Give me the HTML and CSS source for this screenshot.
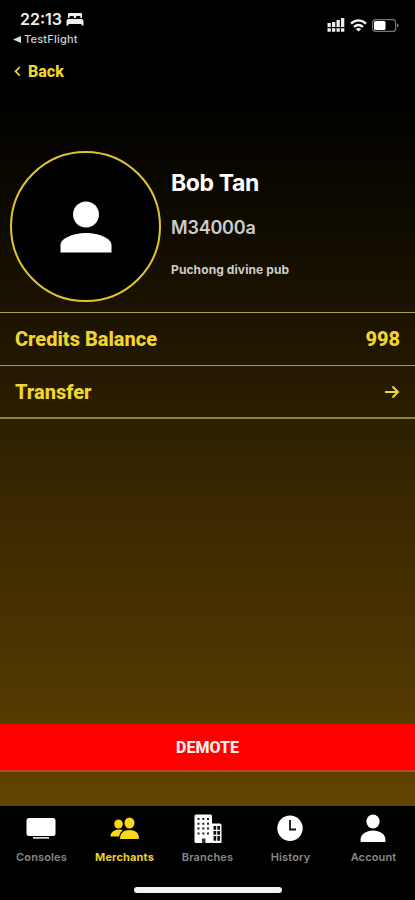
FILE: index.html
```html
<!DOCTYPE html>
<html lang="en">
<head>
<meta charset="utf-8">
<meta name="viewport" content="width=device-width, initial-scale=1">
<title>Merchant</title>
<link rel="stylesheet" href="styles.css">
</head>
<body>
<div class="screen">
  <header class="status">
    <div class="status-left">
      <div class="clock"><span class="time">22:13</span>
        <svg width="18" height="13" viewBox="0 0 18 13" fill="#eee"><path d="M3 0h12q1 0 1 1v4h-1.500V4q0-1-1-1H11q-1 0-1 1v1H8V4q0-1-1-1H4.500q-1 0-1 1v1H2V1q0-1 1-1zM2.500 6h13q2 0 2 2v4.500h-2V11h-13v1.500h-2V8q0-2 2-2z"/></svg>
      </div>
      <div class="return"><svg width="8" height="7" viewBox="0 0 8 7"><path d="M0 3.500 8 0v7z" fill="#ddd"/></svg><span class="app">TestFlight</span></div>
    </div>
    <div class="status-right">
      <svg width="18" height="14" viewBox="0 0 18 14" fill="#eee"><path d="M.5 5h3.300v4H.5zM5 4h3.300v5H5zM9.500 2h3.300v7H9.500zM14 0h3.300v9H14zM.5 10.300h3.300v3.400H.5zM5 10.300h3.300v3.400H5zM9.500 10.300h3.300v3.400H9.500zM14 10.300h3.300v3.400H14z"/></svg>
      <svg width="17" height="13" viewBox="0 0 17 13" fill="none" stroke="#f4f4f4" stroke-width="2.300"><path d="M1 4.500Q8.500-1.800 16 4.500M4 7.800q4.500-3.600 9 0"/><path d="M8.500 12.500 5.800 9.900q2.700-2 5.400 0z" fill="#f4f4f4" stroke="none"/></svg>
      <svg width="27" height="13" viewBox="0 0 27 13"><rect x=".6" y=".6" width="23" height="11.800" rx="3" fill="none" stroke="#777" stroke-width="1.200"/><rect x="2" y="2" width="11.500" height="9" rx="1.500" fill="#fff"/><path d="M25 4.500q1.500.5 1.500 2t-1.500 2z" fill="#888"/></svg>
    </div>
  </header>

  <a class="back"><svg width="7" height="11" viewBox="0 0 7 11"><path d="M5.800 1 1.500 5.300l4.300 4.300" fill="none" stroke="#f2d52e" stroke-width="1.700"/></svg><span class="back-text">Back</span></a>

  <section class="profile">
    <div class="avatar"><svg width="52" height="52" viewBox="0 0 52 52" fill="#fff"><circle cx="26" cy="13.500" r="13"/><path d="M.5 51.500V44C.5 37 14 32 26 32s25.500 5 25.500 12v7.500z"/></svg></div>
    <div class="details">
      <h1 class="name">Bob Tan</h1>
      <div class="code">M34000a</div>
      <div class="place">Puchong divine pub</div>
    </div>
  </section>

  <div class="rows">
    <div class="row"><span class="credits">Credits Balance</span><span class="amount">998</span></div>
    <div class="row"><span class="transfer">Transfer</span><svg class="arrow" width="15" height="14" viewBox="0 0 15 14"><path d="M0 7h13M7.500 1.500 13 7l-5.500 5.500" fill="none" stroke="#f2d52e" stroke-width="2"/></svg></div>
  </div>

  <button class="demote"><span>DEMOTE</span></button>

  <nav class="tabs">
    <div class="tab"><div class="icon consoles"><svg width="30" height="30" viewBox="0 0 30 30"><rect x=".5" y="4" width="29" height="18" rx="2.500" fill="#fff"/><path d="M7 23h16v1.700H7z" fill="#ddd"/></svg></div><span>Consoles</span></div>
    <div class="tab active"><div class="icon"><svg width="30" height="30" viewBox="0 0 30 30" fill="#f9d71c"><ellipse cx="8.500" cy="10" rx="4.300" ry="4.500"/><ellipse cx="19.500" cy="9" rx="5" ry="5.500"/><path d="M.5 22.500C.5 18 5 15.500 9 15.500q2 0 3.800.8-3.200 2.300-3.800 6.200zM10 25c0-6 4-9 9.500-9s9.500 3 9.500 7.500q0 1.500-1.500 1.500z"/></svg></div><span>Merchants</span></div>
    <div class="tab"><div class="icon"><svg width="28" height="30" viewBox="0 0 28 30"><rect x=".5" y=".5" width="17.500" height="28.500" rx="1.500" fill="#fff"/><path d="M18 9.500h8q1.500 0 1.500 1.500v18H18z" fill="#fff"/><path d="M4.500 4v18.500M9.300 4v18.500M14 4v18.500" stroke="#222" stroke-width="2" stroke-dasharray="2 2.800"/><path d="M8 24.500h3.500V29H8z" fill="#333"/><path d="M19.500 12h2.700v3.700h-2.700zM23.300 12H26v3.700h-2.700zM19.500 17h2.700v3.700h-2.700zM23.300 17H26v3.700h-2.700zM19.500 22h2.700v4.700h-2.700zM23.300 22H26v4.700h-2.700z" fill="#111"/></svg></div><span>Branches</span></div>
    <div class="tab"><div class="icon history"><svg width="26" height="30" viewBox="0 0 26 30"><circle cx="13" cy="14.300" r="12.700" fill="#fff"/><path d="M13 6v9.500h6" fill="none" stroke="#111" stroke-width="1.800"/></svg></div><span>History</span></div>
    <div class="tab"><div class="icon account"><svg width="26" height="30" viewBox="0 0 26 30" fill="#fff"><ellipse cx="13" cy="7.500" rx="6.600" ry="7"/><path d="M.5 27v-1C.5 20 6.500 16.500 13 16.500S25.500 20 25.500 26v1q0 1-1 1h-23q-1 0-1-1z"/></svg></div><span>Account</span></div>
    <div class="home"></div>
  </nav>
</div>
</body>
</html>
```
FILE: styles.css
```css
* { box-sizing: border-box; }
body { margin: 0; background: #000; }
svg { display: block; flex: none; }

.screen {
  display: flex;
  flex-direction: column;
  height: 900px;
  overflow: hidden;
  background: linear-gradient(#000 0, #000 90px, #0d0900 200px, #1c1400 320px, #2e2000 430px, #3e2a00 530px, #4b3400 650px, #553b00 720px, #634500 806px);
  color: #fff;
  font-family: Inter, "Liberation Sans", sans-serif;
  white-space: nowrap;
}

.status {
  display: flex;
  justify-content: space-between;
  height: 56px;
  padding: 9px 16px 0 13px;
}
.clock { display: flex; align-items: center; gap: 4px; height: 20px; padding-left: 7px; }
.time { font-size: 16px; font-weight: 600; color: #eee; }
.return { display: flex; align-items: center; gap: 3px; height: 20px; }
.app { font-size: 11px; font-weight: 500; letter-spacing: .2px; color: #ccc; }
.status-right { display: flex; align-items: center; gap: 5px; height: 32px; }

.back { display: flex; align-items: center; gap: 7px; height: 31px; padding-left: 14px; color: #f2d52e; }
.back-text { font: 800 16px Roboto, sans-serif; }

.profile { display: flex; gap: 10px; height: 225px; padding: 64px 0 0 10px; }
.avatar {
  display: flex;
  align-items: center;
  justify-content: center;
  flex: none;
  width: 151px;
  height: 151px;
  border: 2px solid #dfc62f;
  border-radius: 50%;
  background: #000;
}
.details { display: flex; flex-direction: column; padding-top: 17px; }
.name { margin: 0; font-size: 23px; line-height: 30px; font-weight: 650; letter-spacing: -.4px; }
.code { margin-top: 18px; font-size: 18px; line-height: 24px; font-weight: 600; letter-spacing: -.2px; color: #ccc; }
.place { margin-top: 22px; font-size: 12px; line-height: 16px; font-weight: 700; letter-spacing: .1px; color: #ccc; }

.rows { border-top: 1px solid #aaa252; }
.row {
  display: flex;
  align-items: center;
  justify-content: space-between;
  height: 53px;
  padding: 0 15px;
  border-bottom: 1px solid #a19b4a;
  color: #f2d52e;
  font: 800 20px Roboto, sans-serif;
}
.row:last-child { border-bottom: 2px solid #92804c; }

.demote {
  display: flex;
  align-items: center;
  justify-content: center;
  height: 48px;
  margin: auto 0 34px;
  padding: 0;
  border: 0;
  border-bottom: 2px solid #b84b22;
  background: #f00;
  color: #fff0ed;
  font: 800 16px Roboto, sans-serif;
}

.tabs {
  position: relative;
  display: grid;
  grid-template-columns: repeat(5, 1fr);
  flex: none;
  height: 94px;
  padding-top: 8px;
  background: #000;
}
.tab { display: flex; flex-direction: column; align-items: center; color: #888; font-size: 11px; line-height: 16px; font-weight: 600; letter-spacing: .15px; }
.icon { height: 35px; }
.consoles, .history, .account { padding-right: 2px; }
.active { color: #ead12b; font-weight: 700; }
.home { position: absolute; left: 134px; bottom: 7px; width: 148px; height: 6px; border-radius: 3px; background: #f4f4f4; }
```
